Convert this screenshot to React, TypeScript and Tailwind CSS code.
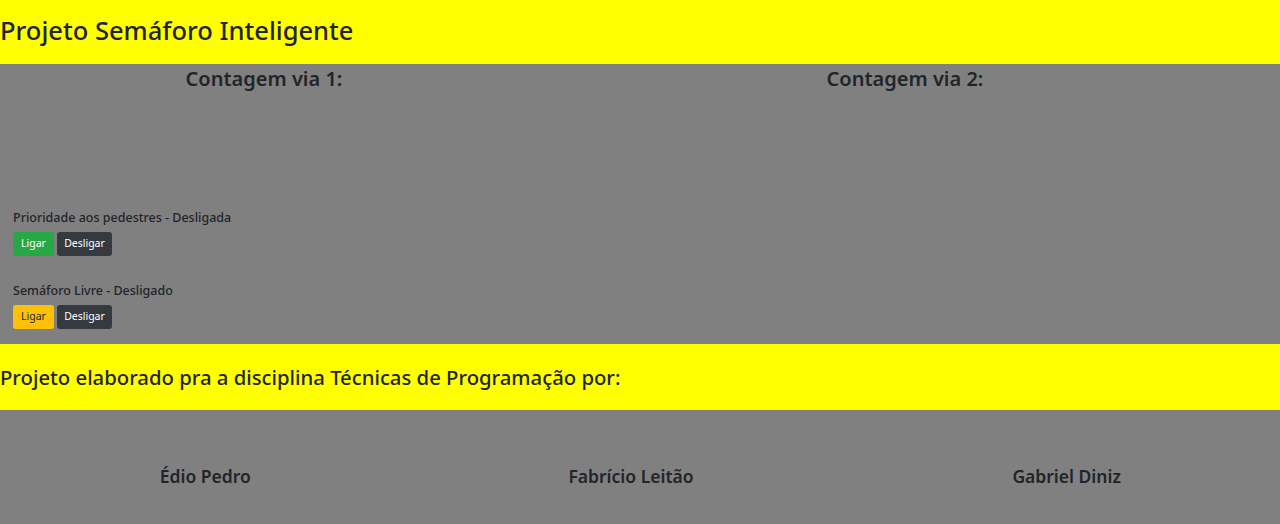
const font = { fontFamily: '"Noto Sans", "Open Sans", sans-serif' };

const Controle = ({ titulo, estado, cor }: { titulo: string; estado: string; cor: "green" | "yellow" }) => (
    <div className="flex flex-col gap-[5px]">
        <p className="text-[12.5px] font-medium leading-[18px]">{titulo} - {estado}</p>
        <div className="flex gap-[3px]">
            <button className={`h-6 w-[41px] rounded-[3px] text-[10.5px] ${cor === "green" ? "bg-[#28a745] text-white" : "bg-[#ffc107] text-[#212529]"}`}>
                Ligar
            </button>
            <button className="h-6 w-[55px] rounded-[3px] text-[10.5px] bg-[#343a40] text-white">Desligar</button>
        </div>
    </div>
);

export default function App() {
    return (
        <div className="w-[1280px] h-[524px] bg-[#808080] text-[#212529]" style={font}>
            {/* Cabeçalho */}
            <header className="h-16 bg-[#ffff00] flex items-center pb-1">
                <h1 className="text-[25.5px] font-medium">Projeto Semáforo Inteligente</h1>
            </header>

            {/* Contagem */}
            <section className="h-[280px] flex flex-col">
                <div className="grid grid-cols-2">
                    <div className="w-[528px]">
                        <h2 className="text-[20px] font-semibold text-center">Contagem via 1:</h2>
                    </div>
                    <div className="w-[530px]">
                        <h2 className="text-[20px] font-semibold text-center">Contagem via 2:</h2>
                    </div>
                </div>
                <div className="flex flex-col gap-[26px] px-[13px] mt-[115px]">
                    <Controle titulo="Prioridade aos pedestres" estado="Desligada" cor="green" />
                    <Controle titulo="Semáforo Livre" estado="Desligado" cor="yellow" />
                </div>
            </section>

            {/* Rodapé */}
            <footer className="h-[66px] bg-[#ffff00] flex items-center">
                <h3 className="text-[20.3px] font-medium">Projeto elaborado pra a disciplina Técnicas de Programação por:</h3>
            </footer>

            <div className="grid grid-cols-3 text-center pt-[53px]">
                <p className="text-[17.5px] font-semibold pr-[16px]">Édio Pedro</p>
                <p className="text-[17.5px] font-semibold pr-[18px]">Fabrício Leitão</p>
                <p className="text-[17.5px] font-semibold">Gabriel Diniz</p>
            </div>
        </div>
    );
}
